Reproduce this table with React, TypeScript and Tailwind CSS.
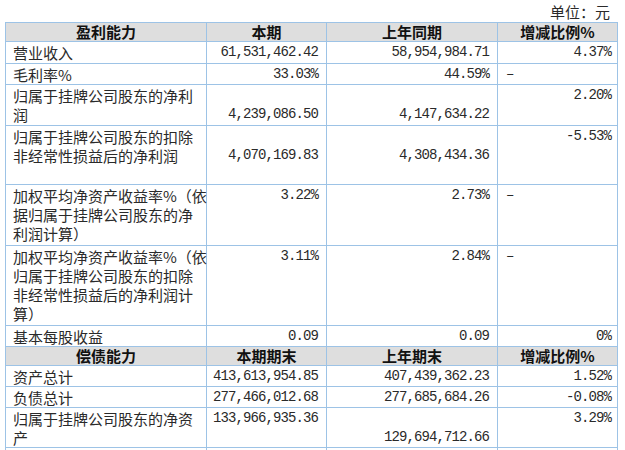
import React from "react";

type Cell = { text: string; line2?: boolean; left?: boolean };
type Row = { label: string[]; h: number; cells: Cell[] };

const cjk = "font-['Noto_Sans_CJK_SC','Noto_Sans_CJK_JP',sans-serif]";
const mono = "font-['Liberation_Mono',monospace]";

const profitRows: Row[] = [
  { label: ["营业收入"], h: 22, cells: [{ text: "61,531,462.42" }, { text: "58,954,984.71" }, { text: "4.37%" }] },
  { label: ["毛利率%"], h: 20, cells: [{ text: "33.03%" }, { text: "44.59%" }, { text: "–", left: true }] },
  {
    label: ["归属于挂牌公司股东的净利", "润"],
    h: 41,
    cells: [{ text: "4,239,086.50", line2: true }, { text: "4,147,634.22", line2: true }, { text: "2.20%" }],
  },
  {
    label: ["归属于挂牌公司股东的扣除", "非经常性损益后的净利润"],
    h: 59,
    cells: [{ text: "4,070,169.83", line2: true }, { text: "4,308,434.36", line2: true }, { text: "-5.53%" }],
  },
  {
    label: ["加权平均净资产收益率%（依", "据归属于挂牌公司股东的净", "利润计算）"],
    h: 61,
    cells: [{ text: "3.22%" }, { text: "2.73%" }, { text: "–", left: true }],
  },
  {
    label: ["加权平均净资产收益率%（依", "归属于挂牌公司股东的扣除", "非经常性损益后的净利润计", "算）"],
    h: 80,
    cells: [{ text: "3.11%" }, { text: "2.84%" }, { text: "–", left: true }],
  },
  { label: ["基本每股收益"], h: 20, cells: [{ text: "0.09" }, { text: "0.09" }, { text: "0%" }] },
];

const debtRows: Row[] = [
  { label: ["资产总计"], h: 21, cells: [{ text: "413,613,954.85" }, { text: "407,439,362.23" }, { text: "1.52%" }] },
  { label: ["负债总计"], h: 20, cells: [{ text: "277,466,012.68" }, { text: "277,685,684.26" }, { text: "-0.08%" }] },
  {
    label: ["归属于挂牌公司股东的净资", "产"],
    h: 40,
    cells: [{ text: "133,966,935.36" }, { text: "129,694,712.66", line2: true }, { text: "3.29%" }],
  },
];

const bd = "border border-[#9dc3e6]";

function Header({ cols }: { cols: string[] }) {
  return (
    <tr className="h-[19px] bg-[#dedede]">
      {cols.map((c) => (
        <th key={c} className={`${bd} ${cjk} p-0 text-center text-[15px] font-bold leading-[18px] text-[#111]`}>
          {c}
        </th>
      ))}
    </tr>
  );
}

function BodyRow({ row }: { row: Row }) {
  return (
    <tr style={{ height: row.h }}>
      <td className={`${bd} ${cjk} pl-[7px] pt-[1px] align-top text-[15px] leading-[19px] text-[#2a2a2a]`}>
        {row.label.map((l, i) => (
          <div key={i} className="whitespace-nowrap">
            {l}
          </div>
        ))}
      </td>
      {row.cells.map((c, i) => (
        <td
          key={i}
          className={`${bd} ${mono} align-top text-[14px] leading-[19px] tracking-[-0.9px] text-[#2a2a2a] ${
            c.left ? "pl-[8px] text-left" : i === 2 ? "pr-[6px] text-right" : "pr-[8px] text-right"
          } ${c.line2 ? "pt-[20px]" : "pt-[1px]"}`}
        >
          {c.text}
        </td>
      ))}
    </tr>
  );
}

export default function App() {
  return (
    <div className="h-[450px] w-[625px] overflow-hidden bg-white">
      <div className={`${cjk} h-[22px] pr-[15px] text-right text-[15px] leading-[24px] text-[#2a2a2a]`}>单位：元</div>
      <table className="ml-[5px] w-[612px] table-fixed border-collapse">
        <colgroup>
          <col className="w-[201px]" />
          <col className="w-[120px]" />
          <col className="w-[171px]" />
          <col className="w-[120px]" />
        </colgroup>
        <tbody>
          <Header cols={["盈利能力", "本期", "上年同期", "增减比例%"]} />
          {profitRows.map((r, i) => (
            <BodyRow key={i} row={r} />
          ))}
          <Header cols={["偿债能力", "本期期末", "上年期末", "增减比例%"]} />
          {debtRows.map((r, i) => (
            <BodyRow key={i} row={r} />
          ))}
          <tr className="h-[20px]">
            <td className={bd}></td>
            <td className={bd}></td>
            <td className={bd}></td>
            <td className={bd}></td>
          </tr>
        </tbody>
      </table>
    </div>
  );
}
